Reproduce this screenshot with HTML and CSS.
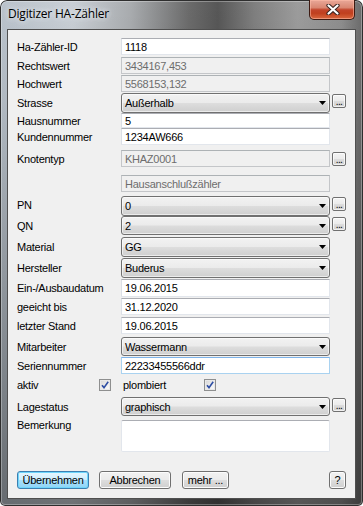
FILE: index.html
```html
<!DOCTYPE html>
<html>
<head>
<meta charset="utf-8">
<link rel="stylesheet" href="styles.css">
</head>
<body>
<div class="window">
  <div class="titlebar">
    <span class="title">Digitizer HA-Zähler</span>
    <div class="close">
      <svg width="14" height="11" viewBox="0 0 14 11">
        <path d="M2.5 1.5 L11.5 9.5 M11.5 1.5 L2.5 9.5" stroke="#3a2420" stroke-width="4.2" stroke-linecap="round" fill="none"/>
        <path d="M2.5 1.5 L11.5 9.5 M11.5 1.5 L2.5 9.5" stroke="#ffffff" stroke-width="2.2" stroke-linecap="round" fill="none"/>
      </svg>
    </div>
  </div>
  <div class="client">
    <div class="form">
      <div class="row h17"><span class="lbl">Ha-Zähler-ID</span><div class="field edit">1118</div></div>
      <div class="row h17 m2"><span class="lbl">Rechtswert</span><div class="field edit dis">3434167,453</div></div>
      <div class="row h17 m1"><span class="lbl">Hochwert</span><div class="field edit dis">5568153,132</div></div>
      <div class="row h20 m1"><span class="lbl">Strasse</span><div class="field combo"><span>Außerhalb</span><svg class="arrow" width="7" height="4" viewBox="0 0 7 4"><path d="M0 0H7L3.5 4Z" fill="#000"/></svg></div><div class="more">...</div></div>
      <div class="row h15"><span class="lbl">Hausnummer</span><div class="field edit">5</div></div>
      <div class="row h17"><span class="lbl">Kundennummer</span><div class="field edit">1234AW666</div></div>
      <div class="row h17 m5"><span class="lbl">Knotentyp</span><div class="field edit dis">KHAZ0001</div><div class="more mid">...</div></div>
      <div class="row h17 m8"><span class="lbl"></span><div class="field edit dis">Hausanschlußzähler</div></div>
      <div class="row h20 m4"><span class="lbl up">PN</span><div class="field combo"><span>0</span><svg class="arrow" width="7" height="4" viewBox="0 0 7 4"><path d="M0 0H7L3.5 4Z" fill="#000"/></svg></div><div class="more">...</div></div>
      <div class="row h19"><span class="lbl down">QN</span><div class="field combo"><span>2</span><svg class="arrow" width="7" height="4" viewBox="0 0 7 4"><path d="M0 0H7L3.5 4Z" fill="#000"/></svg></div><div class="more">...</div></div>
      <div class="row h20 m2"><span class="lbl">Material</span><div class="field combo"><span>GG</span><svg class="arrow" width="7" height="4" viewBox="0 0 7 4"><path d="M0 0H7L3.5 4Z" fill="#000"/></svg></div></div>
      <div class="row h20 m1"><span class="lbl">Hersteller</span><div class="field combo"><span>Buderus</span><svg class="arrow" width="7" height="4" viewBox="0 0 7 4"><path d="M0 0H7L3.5 4Z" fill="#000"/></svg></div></div>
      <div class="row h18 m1"><span class="lbl">Ein-/Ausbaudatum</span><div class="field edit">19.06.2015</div></div>
      <div class="row h17 m1"><span class="lbl">geeicht bis</span><div class="field edit">31.12.2020</div></div>
      <div class="row h17 m2"><span class="lbl">letzter Stand</span><div class="field edit">19.06.2015</div></div>
      <div class="row h19 m3"><span class="lbl">Mitarbeiter</span><div class="field combo"><span>Wassermann</span><svg class="arrow" width="7" height="4" viewBox="0 0 7 4"><path d="M0 0H7L3.5 4Z" fill="#000"/></svg></div></div>
      <div class="row h17 m1"><span class="lbl">Seriennummer</span><div class="field edit focus">22233455566ddr</div></div>
      <div class="row h12 m5">
        <span class="lbl short">aktiv</span>
        <span class="check"><svg width="10" height="10" viewBox="0 0 10 10"><path d="M2 5.2 L4 7.6 L8.2 1.8" stroke="#2d4da3" stroke-width="1.6" fill="none"/></svg></span>
        <span class="lbl2">plombiert</span>
        <span class="check"><svg width="10" height="10" viewBox="0 0 10 10"><path d="M2 5.2 L4 7.6 L8.2 1.8" stroke="#2d4da3" stroke-width="1.6" fill="none"/></svg></span>
      </div>
      <div class="row h19 m6"><span class="lbl">Lagestatus</span><div class="field combo"><span>graphisch</span><svg class="arrow" width="7" height="4" viewBox="0 0 7 4"><path d="M0 0H7L3.5 4Z" fill="#000"/></svg></div><div class="more">...</div></div>
      <div class="row h32 m4 top"><span class="lbl memo-lbl">Bemerkung</span><div class="field memo"></div></div>
    </div>
    <div class="buttons">
      <div class="btn default w72">Übernehmen</div>
      <div class="btn w72 gap10">Abbrechen</div>
      <div class="btn w47 gap11">mehr ...</div>
      <div class="btn w17 help">?</div>
    </div>
  </div>
</div>
</body>
</html>
```

FILE: styles.css
```css
html, body {
  margin: 0;
  padding: 0;
  background: #ffffff;
}
body {
  font-family: "Liberation Sans", Arial, sans-serif;
  font-size: 11px;
  color: #000;
  letter-spacing: -0.25px;
}
.window {
  width: 363px;
  height: 506px;
  box-sizing: border-box;
  padding: 0 7px 7px 7px;
  display: flex;
  flex-direction: column;
  border-radius: 7px 7px 5px 5px;
  background:
    linear-gradient(180deg, rgba(0,0,0,0) 0%, rgba(0,0,0,0.05) 20%, rgba(0,0,0,0.45) 100%),
    linear-gradient(90deg, #b9c2cb 0%, #c9cfd5 20%, #a9acaf 36%, #6b6b6b 52%, #575757 60%, #7f7f7f 70%, #9c9c9c 82%, #8e8e8e 94%, #6a6a6a 100%);
  box-shadow: inset 0 0 0 1px #2e2e2e, inset 0 0 0 2px rgba(255,255,255,0.3);
}
.titlebar {
  height: 29px;
  display: flex;
  align-items: flex-start;
}
.title {
  padding: 6px 0 0 1px;
  font-family: "Open Sans", "Noto Sans", sans-serif;
  font-size: 12px;
  line-height: 16px;
  letter-spacing: -0.2px;
  color: #000;
  text-shadow: 0 0 5px #e8ecf0, 0 0 9px rgba(235,240,245,0.9);
}
.close {
  margin-left: auto;
  margin-right: 1px;
  width: 46px;
  height: 20px;
  box-sizing: border-box;
  border: 1px solid #3d1a12;
  border-top: none;
  border-radius: 0 0 5px 5px;
  background: linear-gradient(180deg, #e9a899 0%, #d98772 40%, #c2442a 52%, #c0401f 70%, #d9683f 100%);
  box-shadow: inset 0 0 0 1px rgba(255,190,170,0.55);
  display: flex;
  align-items: center;
  justify-content: center;
  padding-left: 2px;
}
.client {
  flex: 1;
  display: flex;
  flex-direction: column;
  background: #f0f0f0;
  border: 1px solid #4f4f4f;
  padding: 8px 9px 0 9px;
}
.form {
  display: flex;
  flex-direction: column;
}
.row {
  display: flex;
  align-items: center;
}
.row.top { align-items: flex-start; }
.h12 { height: 12px; }
.h15 { height: 15px; }
.h17 { height: 17px; }
.h18 { height: 18px; }
.h19 { height: 19px; }
.h20 { height: 20px; }
.h32 { height: 32px; }
.m1 { margin-top: 1px; }
.m2 { margin-top: 2px; }
.m3 { margin-top: 3px; }
.m4 { margin-top: 4px; }
.m5 { margin-top: 5px; }
.m6 { margin-top: 6px; }
.m8 { margin-top: 8px; }
.lbl {
  width: 104px;
  flex: none;
  white-space: nowrap;
}
.lbl.up { padding-bottom: 3px; }
.lbl.down { padding-top: 1px; }
.lbl.short { width: 82px; }
.memo-lbl { line-height: 10px; padding-top: 0; }
.field {
  width: 209px;
  height: 100%;
  box-sizing: border-box;
  flex: none;
  display: flex;
  align-items: center;
  white-space: nowrap;
  overflow: hidden;
}
.edit {
  background: #ffffff;
  border: 1px solid #e2e6ec;
  border-top-color: #abadb3;
  border-left-color: #dbdfe6;
  padding-left: 3px;
}
.edit.dis {
  background: #f0f0f0;
  border-color: #c4c6c9;
  border-top-color: #adb2b5;
  color: #6d6d6d;
}
.edit.focus {
  border-color: #a9d2f0;
  border-top-color: #7eb4ea;
}
.combo {
  border: 1px solid #707070;
  border-radius: 3px;
  background: linear-gradient(180deg, #f2f2f2 0%, #ebebeb 48%, #dddddd 52%, #cfcfcf 100%);
  box-shadow: inset 0 0 0 1px rgba(255,255,255,0.6);
  padding-left: 3px;
}
.arrow {
  margin-left: auto;
  margin-right: 3px;
  flex: none;
}
.more {
  align-self: flex-start;
  margin-top: 1px;
  margin-left: 2px;
  width: 15px;
  height: 14px;
  box-sizing: border-box;
  border: 1px solid #707070;
  border-radius: 2px;
  background: linear-gradient(180deg, #f4f4f4 0%, #ebebeb 48%, #dddddd 52%, #d0d0d0 100%);
  box-shadow: inset 0 0 0 1px rgba(255,255,255,0.7);
  font-size: 10px;
  line-height: 14px;
  letter-spacing: -0.6px;
  text-align: center;
  color: #000;
}
.more.mid { margin-top: 2px; }
.check {
  width: 12px;
  height: 12px;
  box-sizing: border-box;
  border: 1px solid #8e8f8f;
  background: linear-gradient(135deg, #d5d5d5 0%, #eeeeee 60%, #fbfbfb 100%);
  box-shadow: inset 0 0 0 1px #e8e8e8;
  display: flex;
  align-items: center;
  justify-content: center;
  flex: none;
}
.lbl2 {
  width: 81px;
  margin-left: 12px;
  white-space: nowrap;
}
.memo {
  background: #ffffff;
  border: 1px solid #e2e6ec;
  border-top-color: #abadb3;
  border-radius: 2px;
}
.buttons {
  margin-top: 19px;
  display: flex;
  height: 18px;
}
.btn {
  height: 18px;
  box-sizing: border-box;
  border: 1px solid #707070;
  border-radius: 3px;
  background: linear-gradient(180deg, #f2f2f2 0%, #ebebeb 48%, #dddddd 52%, #cfcfcf 100%);
  box-shadow: inset 0 0 0 1px #fcfcfc;
  text-align: center;
  line-height: 16px;
  white-space: nowrap;
}
.btn.default {
  border-color: #3c7fb1;
  background: linear-gradient(180deg, #e8f7fe 0%, #cdeefd 48%, #a9e0fb 52%, #8fd4f6 100%);
  box-shadow: inset 0 0 0 1px #6fd6fb;
}
.w72 { width: 72px; }
.w47 { width: 47px; }
.w17 { width: 17px; }
.gap10 { margin-left: 10px; }
.gap11 { margin-left: 11px; }
.help { margin-left: auto; }
```
